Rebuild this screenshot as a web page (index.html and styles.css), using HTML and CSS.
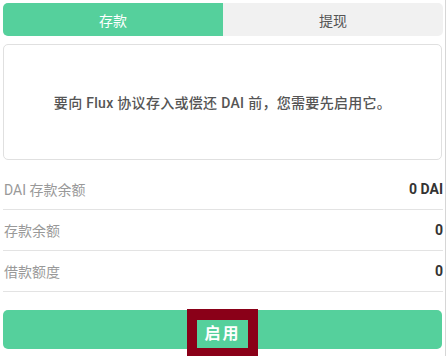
FILE: index.html
```html
<!DOCTYPE html>
<html lang="zh-CN">
<head>
    <meta charset="UTF-8">
    <meta name="viewport" content="width=device-width, initial-scale=1.0">
    <title>存款 | Flux</title>
    <link rel="stylesheet" href="styles.css">
</head>
<body>
    <div class="frame">
        <div class="panel">
            <div class="tabs">
                <div class="tab active">存款</div>
                <div class="tab">提现</div>
            </div>

            <div class="notice">要向 Flux 协议存入或偿还 DAI 前，您需要先启用它。</div>

            <div class="rows">
                <div class="row">
                    <span class="label">DAI 存款余额</span>
                    <span class="value">0 DAI</span>
                </div>
                <div class="row">
                    <span class="label">存款余额</span>
                    <span class="value">0</span>
                </div>
                <div class="row">
                    <span class="label">借款额度</span>
                    <span class="value">0</span>
                </div>
            </div>

            <button class="btn"><span class="btn-label">启用</span></button>
        </div>
    </div>
</body>
</html>
```

FILE: styles.css
```css
html, body {
    margin: 0;
    padding: 0;
    background: #fff;
}
body {
    font-family: Roboto, "Noto Sans CJK SC", sans-serif;
    color: #333;
    font-size: 14px;
}
.frame {
    width: 445px;
    height: 356px;
    border-right: 1px solid #d6d6d6;
    overflow: hidden;
}
.panel {
    padding: 3px 2px 0 3px;
}
.tabs {
    display: flex;
    height: 33px;
    background: #f1f1f1;
    border-radius: 5px;
    overflow: hidden;
}
.tab {
    flex: 1;
    display: flex;
    align-items: center;
    justify-content: center;
    color: #555;
    font-size: 14px;
}
.tab.active {
    background: #55d09c;
    color: #fff;
}
.notice {
    margin-top: 8px;
    height: 114px;
    margin-right: 1px;
    border: 1px solid #e0e0e0;
    border-radius: 5px;
    display: flex;
    align-items: center;
    justify-content: center;
    color: #555;
    font-weight: 500;
    font-size: 14px;
    letter-spacing: 0.3px;
}
.rows {
    margin-top: 9px;
}
.row {
    display: flex;
    justify-content: space-between;
    align-items: center;
    height: 40px;
    border-bottom: 1px solid #e3e3e3;
}
.label {
    color: #999;
    padding-left: 1px;
}
.value {
    font-weight: 700;
    color: #333;
}
.btn {
    display: flex;
    align-items: center;
    justify-content: center;
    width: 439px;
    height: 39px;
    margin-top: 18px;
    border: none;
    border-radius: 5px;
    background: #55d09c;
    padding: 0;
    font-family: inherit;
    overflow: visible;
}
.btn-label {
    display: block;
    border: 10px solid #8a0018;
    border-top-width: 11px;
    padding: 0 7px;
    height: 28px;
    line-height: 28px;
    margin-top: 7px;
    color: #fff;
    font-weight: 700;
    font-size: 16px;
    letter-spacing: 2px;
}
```
